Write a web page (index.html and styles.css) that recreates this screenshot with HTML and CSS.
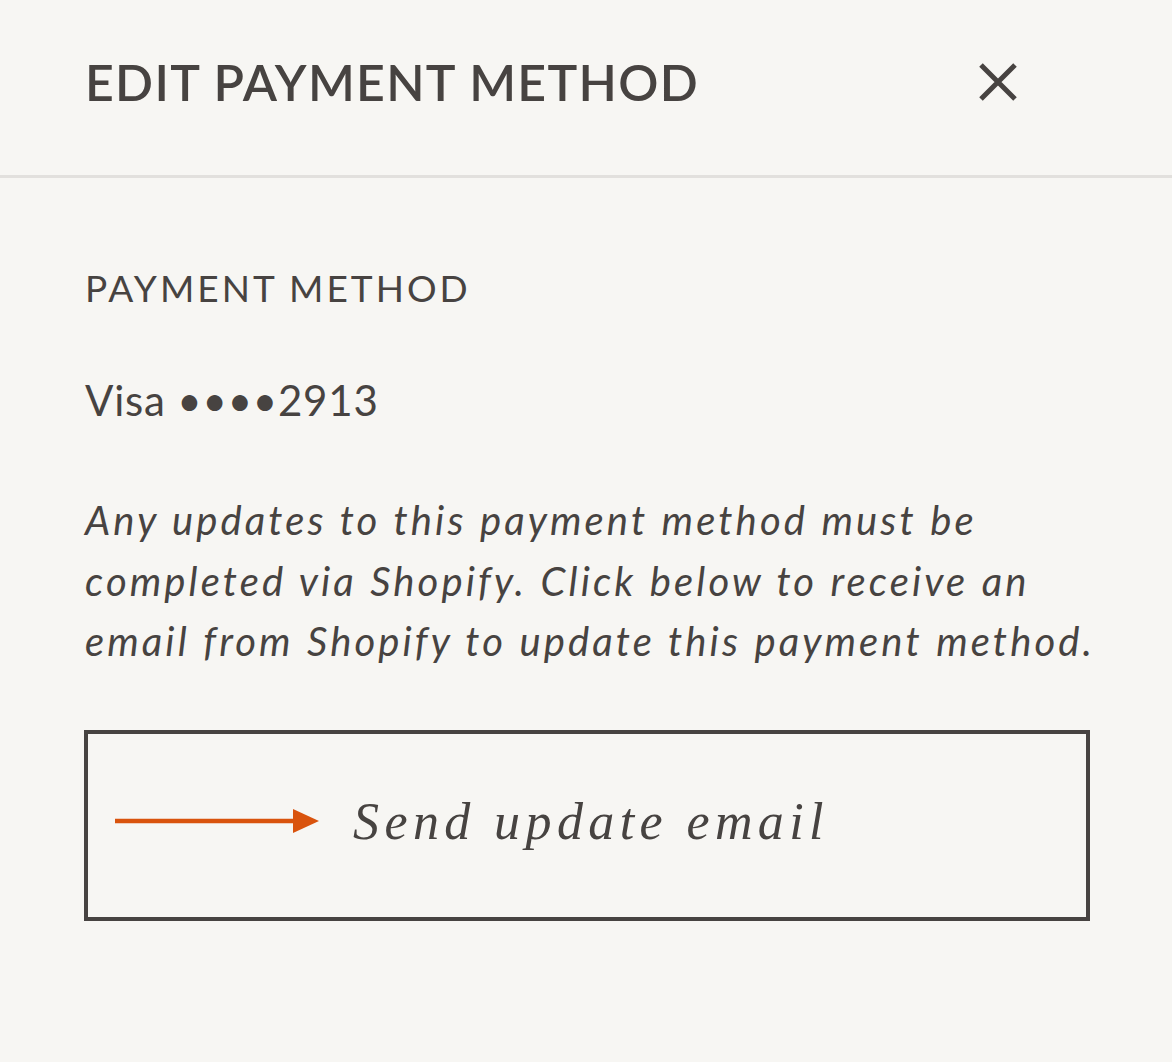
FILE: index.html
```html
<!DOCTYPE html>
<html lang="en">
<head>
  <meta charset="UTF-8">
  <meta name="viewport" content="width=device-width, initial-scale=1.0">
  <title>Edit payment method</title>
  <link rel="stylesheet" href="styles.css">
</head>
<body>

  <div class="panel">
    <div class="panel-header">
      <h1 class="panel-title">Edit payment method</h1>
      <button class="close" aria-label="Close">
        <svg width="40" height="40" viewBox="0 0 40 40">
          <path d="M3 3 L37 37 M37 3 L3 37" stroke="#474341" stroke-width="5" fill="none"/>
        </svg>
      </button>
    </div>

    <div class="panel-body">
      <div class="label">Payment method</div>
      <div class="card">Visa ••••2913</div>
      <p class="note">Any updates to this payment method must be completed via Shopify. Click below to receive an email from Shopify to update this payment method.</p>

      <button class="send">
        <svg class="arrow" width="204" height="26" viewBox="0 0 204 26">
          <path d="M0 13 H182" stroke="#d9530d" stroke-width="4.5"/>
          <path d="M178 1 L204 13 L178 25 Z" fill="#d9530d"/>
        </svg>
        <span>Send update email</span>
      </button>
    </div>
  </div>

</body>
</html>
```

FILE: styles.css
```css
body {
  margin: 0;
  background: #f7f6f3;
  color: #474341;
  font-family: 'Lato', 'Noto Sans', sans-serif;
}

.panel {
  width: 1172px;
  min-height: 1062px;
}

.panel-header {
  display: flex;
  align-items: center;
  justify-content: space-between;
  height: 163px;
  padding: 0 154px 12px 85px;
  border-bottom: 3px solid #e2e0dd;
}

.panel-title {
  margin: 0;
  font-size: 50px;
  font-weight: 600;
  letter-spacing: 1.3px;
  text-transform: uppercase;
}

.close {
  background: none;
  border: none;
  padding: 0;
  cursor: pointer;
  display: flex;
}

.panel-body {
  padding: 87px 82px 0 85px;
}

.label {
  font-size: 37px;
  letter-spacing: 3px;
  text-transform: uppercase;
}

.card {
  margin-top: 65px;
  font-size: 42px;
  letter-spacing: 0.8px;
}

.note {
  margin: 65px -40px 0 0;
  font-size: 40px;
  font-style: italic;
  line-height: 60.5px;
  letter-spacing: 3.1px;
  word-spacing: 1px;
}

.send {
  display: flex;
  align-items: center;
  gap: 34px;
  width: 1006px;
  height: 191px;
  margin: 58px 0 0 -1px;
  padding: 0 0 8px 27px;
  background: none;
  border: 4.5px solid #474341;
  color: #474341;
  cursor: pointer;
  font-family: 'Liberation Serif', serif;
  font-style: italic;
  font-size: 52px;
  letter-spacing: 5.4px;
}

.arrow {
  flex: none;
}
```
